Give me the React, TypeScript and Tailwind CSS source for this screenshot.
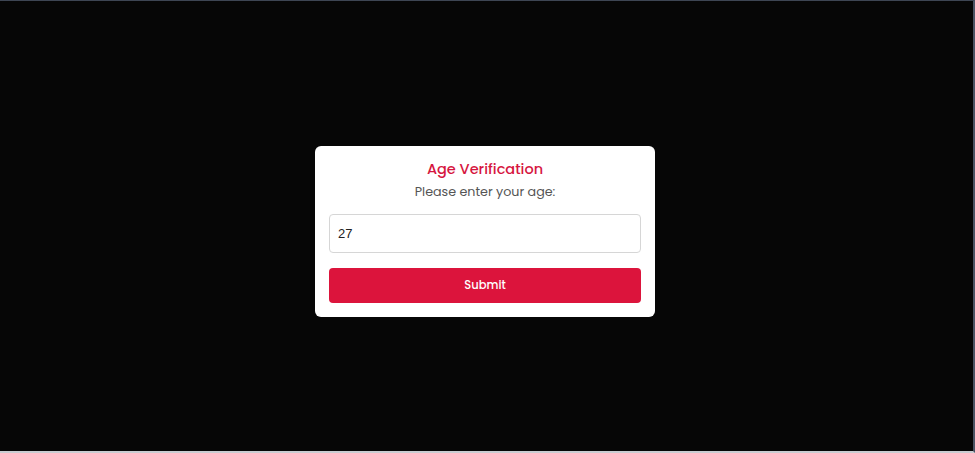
import React, { useState } from 'react';

export default function App() {
  const [age, setAge] = useState('27');

  return (
    <div className="w-[975px] h-[453px] bg-[#060606] border-t border-t-[#3d4553] border-r-2 border-r-[#4a5363] border-b-2 border-b-[#c9ccd1] flex items-center justify-center font-['Poppins','Noto_Sans',sans-serif]">
      {/* Card */}
      <div className="w-[340px] bg-white rounded-md px-[14px] pt-[13px] pb-[14px] flex flex-col items-center mt-[11px] mr-[3px]">
        <h2 className="text-[14.5px] leading-[20px] font-medium text-[#d6163f]">Age Verification</h2>
        <p className="mt-[4px] text-[12.7px] leading-[18px] text-[#555555]">Please enter your age:</p>

        <input
          type="number"
          value={age}
          onChange={e => setAge(e.target.value)}
          className="mt-[13px] w-full h-[39px] px-[8px] border border-[#d6d6d6] rounded-[4px] text-[13px] text-[#222222] font-['Liberation_Sans',Arial,sans-serif] outline-none [appearance:textfield] [&::-webkit-inner-spin-button]:appearance-none"
        />

        <button className="mt-[15px] w-full h-[35px] bg-[#dc143c] rounded-[4px] text-white text-[11.5px] font-medium">
          Submit
        </button>
      </div>
    </div>
  );
}
